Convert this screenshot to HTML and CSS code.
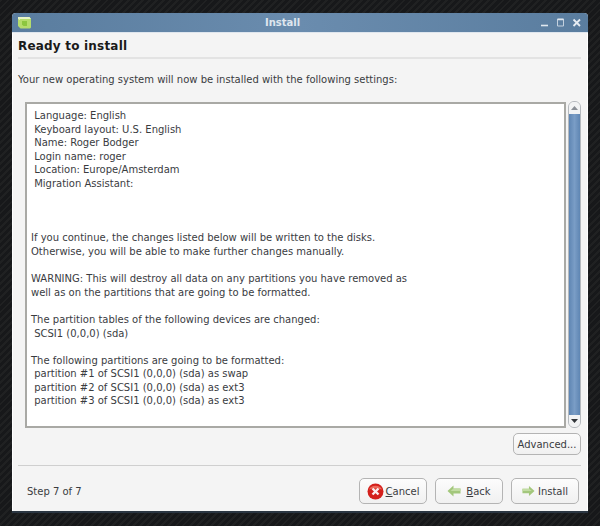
FILE: index.html
```html
<!DOCTYPE html>
<html lang="en">
<head>
    <meta charset="UTF-8">
    <meta name="viewport" content="width=device-width, initial-scale=1.0">
    <title>Install</title>
    <link rel="stylesheet" href="styles.css">
</head>
<body>
    <div class="window">
        <!-- title bar -->
        <div class="titlebar">
            <svg class="app-icon" width="15" height="13" viewBox="0 0 15 13">
                <path d="M1 1h11.5l1.5 2v8.5l-1 1H3.500L1 10z" fill="#b4dc6c"/>
                <path d="M1 1h11.5l1.5 2H3v1L1 3z" fill="#e8f5c8"/>
                <path d="M5 5h5v5H6.500L5 8.500z" fill="#8cc63f"/>
            </svg>
            <span class="title">Install</span>
            <div class="win-buttons">
                <svg width="12" height="12" viewBox="0 0 12 12"><path d="M2 8.500h7" stroke="#dfe7ef" stroke-width="1.600"/></svg>
                <svg width="12" height="12" viewBox="0 0 12 12"><path d="M2.500 2h6v7h-6z" fill="none" stroke="#c3d0de"/><path d="M2.500 2.500h6" stroke="#dfe7ef" stroke-width="1.500"/></svg>
                <svg width="12" height="12" viewBox="0 0 12 12"><path d="M2.500 2.500l6.500 6.500M9 2.500l-6.500 6.500" stroke="#e6ecf2" stroke-width="1.800"/></svg>
            </div>
        </div>

        <div class="content">
            <h1 class="heading">Ready to install</h1>
            <div class="rule"></div>
            <p class="intro">Your new operating system will now be installed with the following settings:</p>

            <!-- summary text + scrollbar -->
            <div class="summary-row">
                <pre class="summary"> Language: English
 Keyboard layout: U.S. English
 Name: Roger Bodger
 Login name: roger
 Location: Europe/Amsterdam
 Migration Assistant: 



If you continue, the changes listed below will be written to the disks.
Otherwise, you will be able to make further changes manually.

WARNING: This will destroy all data on any partitions you have removed as
well as on the partitions that are going to be formatted.

The partition tables of the following devices are changed:
 SCSI1 (0,0,0) (sda)

The following partitions are going to be formatted:
 partition #1 of SCSI1 (0,0,0) (sda) as swap
 partition #2 of SCSI1 (0,0,0) (sda) as ext3
 partition #3 of SCSI1 (0,0,0) (sda) as ext3</pre>
                <div class="scrollbar">
                    <div class="arrow arrow-up"><svg width="7" height="4" viewBox="0 0 7 4"><path d="M3.500 0L7 4H0z" fill="#8a8f96"/></svg></div>
                    <div class="thumb"></div>
                    <div class="arrow arrow-down"><svg width="7" height="4" viewBox="0 0 7 4"><path d="M0 0h7L3.500 4z" fill="#33363a"/></svg></div>
                </div>
            </div>

            <div class="advanced-row">
                <button class="btn btn-advanced">Advanced...</button>
            </div>

            <div class="rule rule-bottom"></div>

            <div class="footer">
                <span class="step">Step 7 of 7</span>
                <div class="footer-buttons">
                    <button class="btn btn-action">
                        <svg width="17" height="17" viewBox="0 0 17 17">
                            <circle cx="8.500" cy="8.500" r="8" fill="#d4201c"/>
                            <path d="M2 6.500a7 6 0 0 1 13 0a14 8 0 0 0-13 0z" fill="#ec6a5c"/>
                            <path d="M5.500 5.500l6 6M11.500 5.500l-6 6" stroke="#fbeeee" stroke-width="2.400"/>
                        </svg>
                        <span><u>C</u>ancel</span>
                    </button>
                    <button class="btn btn-action">
                        <svg width="14" height="12" viewBox="0 0 14 12"><path d="M0.500 6L6.500 0.500v3h7v5h-7v3z" fill="#a3c77c"/><path d="M6.500 3.500h7v2.500h-10z" fill="#c2dca3"/></svg>
                        <span class="label-gap"><u>B</u>ack</span>
                    </button>
                    <button class="btn btn-action btn-install">
                        <svg width="13" height="12" viewBox="0 0 14 12"><path d="M13.500 6L7.500 0.500v3h-7v5h7v3z" fill="#a3c77c"/><path d="M7.500 3.500h-7v2.500h10z" fill="#c2dca3"/></svg>
                        <span>Install</span>
                    </button>
                </div>
            </div>
        </div>
    </div>
</body>
</html>
```

FILE: styles.css
```css
html, body {
    margin: 0;
    padding: 0;
}

body {
    width: 600px;
    height: 526px;
    overflow: hidden;
    box-sizing: border-box;
    padding: 13px 12px 0;
    font-family: "DejaVu Sans", sans-serif;
    font-size: 10px;
    color: #3a3c3f;
    background-color: #1b1c1d;
    background-image: repeating-linear-gradient(135deg, #202122 0, #202122 2px, #17181a 2px, #17181a 5px);
}

.window {
    width: 576px;
    height: 500px;
    box-sizing: border-box;
    display: flex;
    flex-direction: column;
    background-color: #f4f4f4;
    border-radius: 4px 4px 0 0;
    border-bottom: 2px solid #2b3642;
    box-shadow: 0 0 1px #2b3642;
}

.titlebar {
    height: 20px;
    flex-shrink: 0;
    display: flex;
    align-items: center;
    padding: 0 5px;
    background: linear-gradient(90deg, #5a7d9f, #6a8cae 50%, #5a7d9f);
    border-radius: 4px 4px 0 0;
    border-bottom: 1px solid #dfe6ee;
    box-sizing: border-box;
}

.title {
    flex: 1;
    margin-right: 6px;
    text-align: center;
    color: #dfe6ee;
    font-size: 10px;
    font-weight: bold;
}

.win-buttons {
    display: flex;
    gap: 4px;
}

.content {
    flex: 1;
    display: flex;
    flex-direction: column;
    padding: 0 6px 0 5px;
    border-left: 1px solid #fff;
    border-right: 1px solid #fff;
}

.heading {
    margin: 5px 0 0;
    font-size: 12px;
    line-height: 16px;
    font-weight: bold;
    color: #1a1a1a;
    letter-spacing: 0.2px;
}

.rule {
    height: 2px;
    margin-top: 3px;
    background-color: #e3e3e3;
}

.intro {
    margin: 14px 0 0;
    line-height: 14px;
}

.summary-row {
    display: flex;
    margin-top: 15px;
    gap: 2px;
}

.summary {
    width: 541px;
    height: 326px;
    box-sizing: border-box;
    margin: 0 0 0 7px;
    padding: 5px 4px 0;
    background-color: #fff;
    border: 2px solid #a9a9a5;
    font-family: "DejaVu Sans", sans-serif;
    font-size: 10px;
    line-height: 13.6px;
    color: #3a3c3f;
    overflow: hidden;
}

.scrollbar {
    width: 13px;
    height: 327px;
    display: flex;
    flex-direction: column;
    margin-top: -1px;
    border: 1px solid #b5b9be;
    border-radius: 6px;
    box-sizing: border-box;
    overflow: hidden;
    background-color: #e9e9e9;
}

.arrow {
    height: 12px;
    flex-shrink: 0;
    display: flex;
    align-items: center;
    justify-content: center;
    background-color: #f2f3f4;
}

.thumb {
    flex: 1;
    background: linear-gradient(90deg, #5f86b3, #7a9dc6 50%, #5f86b3);
}

.advanced-row {
    display: flex;
    justify-content: flex-end;
    margin-top: 5px;
}

.btn {
    display: flex;
    align-items: center;
    justify-content: center;
    box-sizing: border-box;
    font-family: "DejaVu Sans", sans-serif;
    font-size: 10px;
    color: #3a3c3f;
    padding: 0;
    background: linear-gradient(#fcfcfc, #f0f0f0);
    border: 1px solid #b4b4b4;
    border-radius: 5px;
}

.btn-advanced {
    width: 68px;
    height: 22px;
}

.rule-bottom {
    height: 1px;
    margin-top: 10px;
    background-color: #cfcfcf;
}

.footer {
    display: flex;
    align-items: center;
    justify-content: space-between;
    margin-top: 12px;
    padding-left: 9px;
    padding-right: 2px;
}

.footer-buttons {
    display: flex;
    gap: 8px;
}

.btn-action {
    width: 68px;
    height: 26px;
    gap: 2px;
}

.btn-action .label-gap {
    margin-left: 3px;
}

.btn-action svg {
    flex-shrink: 0;
}

.btn-install {
    gap: 3px;
}
```
